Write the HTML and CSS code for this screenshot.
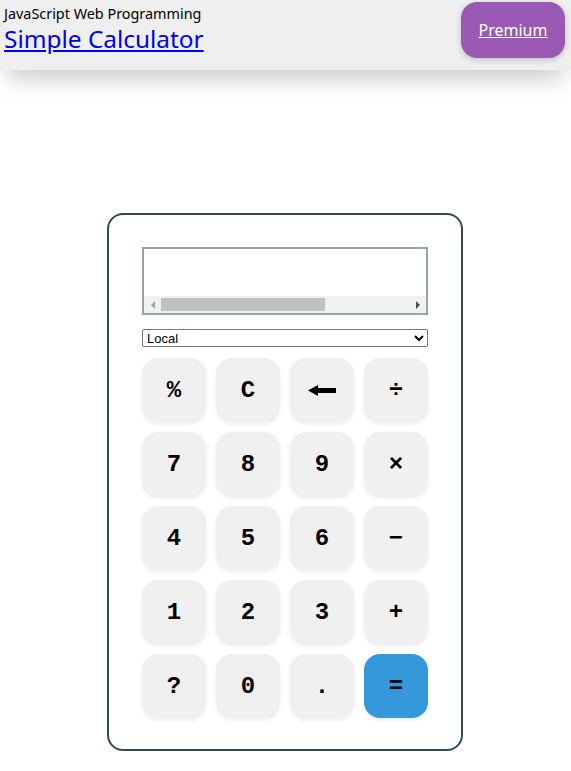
FILE: index.html
```html
<!DOCTYPE html>
<html>
<head>
<meta charset="utf-8">
<title>Simple Calculator</title>
<link rel="stylesheet" href="styles.css">
</head>
<body>
<header class="topbar">
  <div class="brand">
    <div class="kicker">JavaScript Web Programming</div>
    <a class="title" href="#">Simple Calculator</a>
  </div>
  <a class="premium" href="#">Premium</a>
</header>
<main class="page">
  <div class="calc">
    <div class="display">
      <div class="display-text"></div>
      <div class="hscroll">
        <span class="sb-btn"><span class="tri tri-left"></span></span>
        <span class="sb-track"><span class="sb-thumb"></span></span>
        <span class="sb-btn"><span class="tri tri-right"></span></span>
      </div>
    </div>
    <select class="mode"><option>Local</option></select>
    <div class="keys">
      <button class="key">%</button>
      <button class="key">C</button>
      <button class="key" aria-label="Backspace"><svg class="back" width="28" height="11" viewBox="0 0 28 11"><polygon points="0,5.5 10,0 10,11" fill="#000"/><rect x="9" y="3" width="19" height="5" fill="#000"/></svg></button>
      <button class="key">&divide;</button>
      <button class="key">7</button>
      <button class="key">8</button>
      <button class="key">9</button>
      <button class="key">&times;</button>
      <button class="key">4</button>
      <button class="key">5</button>
      <button class="key">6</button>
      <button class="key">&minus;</button>
      <button class="key">1</button>
      <button class="key">2</button>
      <button class="key">3</button>
      <button class="key">+</button>
      <button class="key">?</button>
      <button class="key">0</button>
      <button class="key">.</button>
      <button class="key equals">=</button>
    </div>
  </div>
</main>
</body>
</html>
```
FILE: styles.css
```css
html, body {
  margin: 0;
  padding: 0;
  background: #ffffff;
}
body {
  font-family: "Noto Sans", "DejaVu Sans", sans-serif;
}
.topbar {
  height: 70px;
  box-sizing: border-box;
  background: #efefef;
  display: flex;
  justify-content: space-between;
  align-items: flex-start;
  padding: 2px 6px 0 4px;
  box-shadow: 0 16px 24px -8px rgba(0, 0, 0, 0.22);
  position: relative;
}
.brand {
  display: flex;
  flex-direction: column;
  padding-top: 3px;
}
.kicker {
  font-size: 14.4px;
  line-height: 18px;
  color: #000;
}
.title {
  font-size: 24.4px;
  line-height: 31px;
  color: #0000ee;
}
.premium {
  width: 104px;
  height: 56px;
  box-sizing: border-box;
  background: #9b59b6;
  color: #ffffff;
  border-radius: 16px;
  display: flex;
  align-items: center;
  justify-content: center;
  font-size: 16px;
  box-shadow: 0 2px 6px rgba(0, 0, 0, 0.2);
}
.page {
  display: flex;
  justify-content: center;
  padding-top: 143px;
  padding-right: 1px;
}
.calc {
  width: 356px;
  box-sizing: border-box;
  border: 2px solid #34495e;
  border-radius: 16px;
  padding: 32px 33px 31px 33px;
  display: flex;
  flex-direction: column;
}
.display {
  height: 68px;
  box-sizing: border-box;
  border: 2px solid #95a5a6;
  background: #fff;
  display: flex;
  flex-direction: column;
}
.display-text {
  flex: 1;
}
.hscroll {
  height: 17px;
  background: #f1f1f1;
  display: flex;
}
.sb-btn {
  width: 17px;
  display: flex;
  align-items: center;
  justify-content: center;
}
.sb-track {
  flex: 1;
  display: flex;
  padding: 2px 0 2px 0;
}
.sb-thumb {
  width: 164px;
  background: #c1c1c1;
}
.tri {
  width: 0;
  height: 0;
  border-top: 4px solid transparent;
  border-bottom: 4px solid transparent;
}
.tri-left {
  border-right: 4px solid #a3a3a3;
}
.tri-right {
  border-left: 4px solid #505050;
}
.mode {
  margin-top: 14px;
  height: 18px;
  font-family: "Liberation Sans", Arial, sans-serif;
  font-size: 13px;
  padding: 0;
  border: 1px solid #767676;
  border-radius: 2px;
  background: #fff;
  color: #000;
}
.keys {
  margin-top: 11px;
  display: grid;
  grid-template-columns: repeat(4, 64px);
  grid-auto-rows: 64px;
  gap: 10px;
}
.key {
  border: none;
  border-radius: 16px;
  background: #f0f0f0;
  box-shadow: 0 2px 4px rgba(0, 0, 0, 0.08);
  font-family: "Liberation Mono", "Courier New", monospace;
  font-weight: bold;
  font-size: 24px;
  color: #000;
  padding: 0;
  display: flex;
  align-items: center;
  justify-content: center;
}
.back {
  display: block;
}
.key.equals {
  background: #3498db;
}
```
